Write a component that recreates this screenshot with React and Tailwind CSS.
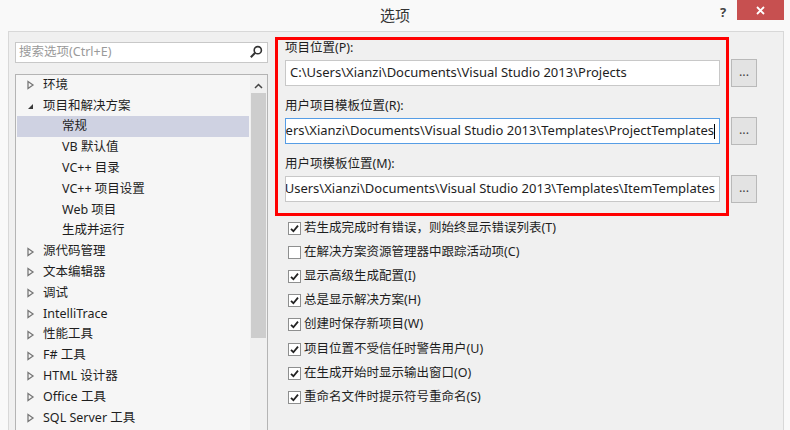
import React from 'react';

const treeItems = [
  { label: '环境', level: 0, state: 'closed' },
  { label: '项目和解决方案', level: 0, state: 'open' },
  { label: '常规', level: 1, selected: true },
  { label: 'VB 默认值', level: 1 },
  { label: 'VC++ 目录', level: 1 },
  { label: 'VC++ 项目设置', level: 1 },
  { label: 'Web 项目', level: 1 },
  { label: '生成并运行', level: 1 },
  { label: '源代码管理', level: 0, state: 'closed' },
  { label: '文本编辑器', level: 0, state: 'closed' },
  { label: '调试', level: 0, state: 'closed' },
  { label: 'IntelliTrace', level: 0, state: 'closed' },
  { label: '性能工具', level: 0, state: 'closed' },
  { label: 'F# 工具', level: 0, state: 'closed' },
  { label: 'HTML 设计器', level: 0, state: 'closed' },
  { label: 'Office 工具', level: 0, state: 'closed' },
  { label: 'SQL Server 工具', level: 0, state: 'closed' },
];

const options = [
  { label: '若生成完成时有错误，则始终显示错误列表(T)', checked: true },
  { label: '在解决方案资源管理器中跟踪活动项(C)', checked: false },
  { label: '显示高级生成配置(I)', checked: true },
  { label: '总是显示解决方案(H)', checked: true },
  { label: '创建时保存新项目(W)', checked: true },
  { label: '项目位置不受信任时警告用户(U)', checked: true },
  { label: '在生成开始时显示输出窗口(O)', checked: true },
  { label: '重命名文件时提示符号重命名(S)', checked: true },
];

const paths = [
  { label: '项目位置(P):', value: 'C:\\Users\\Xianzi\\Documents\\Visual Studio 2013\\Projects', align: 'start' },
  { label: '用户项目模板位置(R):', value: 'C:\\Users\\Xianzi\\Documents\\Visual Studio 2013\\Templates\\ProjectTemplates', align: 'end', focused: true },
  { label: '用户项模板位置(M):', value: 'C:\\Users\\Xianzi\\Documents\\Visual Studio 2013\\Templates\\ItemTemplates', align: 'end' },
];

const Arrow = ({ state }) =>
  state === 'open' ? (
    <svg width="9" height="9" viewBox="0 0 9 9">
      <polygon points="7,2 7,7 2,7" fill="#3a3a3a" />
    </svg>
  ) : (
    <svg width="9" height="10" viewBox="0 0 9 10">
      <polygon points="2,1.5 7,5 2,8.5" fill="none" stroke="#777" strokeWidth="1.3" />
    </svg>
  );

const Check = () => (
  <svg width="11" height="11" viewBox="0 0 11 11">
    <path d="M2 5.8 L4.4 8.2 L9 2.6" fill="none" stroke="#222" strokeWidth="1.8" />
  </svg>
);

const App = () => {
  return (
    <div className="w-[790px] h-[430px] bg-[#f9f9f9] relative overflow-hidden text-[#1e1e1e] font-['Segoe_UI','Noto_Sans','Noto_Sans_CJK_SC',sans-serif] text-[12.5px]">
      {/* title bar */}
      <div className="h-[31px] flex items-start">
        <div className="w-[78px]" />
        <div className="flex-1 text-center text-[15px] leading-[31px] text-[#333]">选项</div>
        <div className="w-[78px] flex items-start">
          <span className="w-[22px] pt-[3px] text-center font-bold text-[13px] text-[#444]">?</span>
          <div className="ml-[3px] w-[47px] h-[20px] bg-[#c75050] flex items-center justify-center">
            <svg width="9" height="9" viewBox="0 0 9 9">
              <path d="M1 1 L8 8 M8 1 L1 8" stroke="#fff" strokeWidth="1.8" />
            </svg>
          </div>
        </div>
      </div>

      {/* body panel */}
      <div className="ml-[8px] mr-[6px] h-[420px] bg-[#f0f0f0] border border-[#d8d8d8] flex">
        {/* left column */}
        <div className="w-[259px] pl-[6px] pt-[10px] flex flex-col">
          <div className="h-[21px] bg-white border border-[#c8c8c8] flex items-center pl-[3px] pr-[4px]">
            <span className="flex-1 text-[#9a9a9a]">搜索选项(Ctrl+E)</span>
            <svg width="14" height="14" viewBox="0 0 14 14">
              <circle cx="8.8" cy="5.2" r="3.6" fill="none" stroke="#333" strokeWidth="1.6" />
              <path d="M6.2 7.8 L1.8 12.2" stroke="#333" strokeWidth="2" />
            </svg>
          </div>
          <div className="mt-[11px] h-[380px] bg-[#f6f6f6] border border-[#b4b4b4] flex">
            <div className="flex-1 pl-[1px] pr-[1px]">
              {treeItems.map((it) => (
                <div
                  key={it.label}
                  className={`h-[20.8px] flex items-center ${it.selected ? 'bg-[#cfd2e2]' : ''} ${it.level === 0 ? 'pl-[9px]' : 'pl-[45px]'}`}
                >
                  {it.level === 0 && (
                    <span className="w-[17px] flex items-center">
                      <Arrow state={it.state} />
                    </span>
                  )}
                  <span>{it.label}</span>
                </div>
              ))}
            </div>
            <div className="w-[17px] bg-[#f0f0f0] flex flex-col items-center">
              <svg className="mt-[8px]" width="9" height="6" viewBox="0 0 9 6">
                <path d="M1 5 L4.5 1.5 L8 5" fill="none" stroke="#444" strokeWidth="1.5" />
              </svg>
              <div className="mt-[4px] w-[15px] h-[245px] bg-[#cdcdcd]" />
            </div>
          </div>
        </div>

        {/* right column */}
        <div className="flex-1 pl-[17px] pt-[7px]">
          {paths.map((p) => (
            <div key={p.label} className="mb-[10px]">
              <div className="h-[18px] leading-[18px]">{p.label}</div>
              <div className="mt-[2px] flex items-center">
                <div
                  className={`w-[435px] h-[26px] bg-white border overflow-hidden whitespace-nowrap flex items-center px-[4px] text-[13px] ${p.focused ? 'border-[#569de5]' : 'border-[#c8c8c8]'} ${p.align === 'end' ? 'justify-end' : 'justify-start'}`}
                >
                  <span className="shrink-0">{p.value}</span>
                  {p.focused && <span className="shrink-0 w-[1px] h-[15px] bg-black" />}
                </div>
                <div className="ml-[11px] w-[26px] h-[28px] bg-[#e3e3e3] border border-[#b9b9b9] flex items-center justify-center text-[#444] leading-none pb-[2px]">
                  ...
                </div>
              </div>
            </div>
          ))}
          <div className="pt-[3px] pl-[3px]">
            {options.map((o) => (
              <div key={o.label} className="h-[24.2px] flex items-center">
                <span className="w-[13px] h-[13px] bg-white border border-[#8e8f8f] flex items-center justify-center">
                  {o.checked && <Check />}
                </span>
                <span className="ml-[3px]">{o.label}</span>
              </div>
            ))}
          </div>
        </div>
      </div>

      {/* annotation frame */}
      <div className="absolute left-[275px] top-[37px] w-[454px] h-[179px] border-[3px] border-[#f00] pointer-events-none" />
    </div>
  );
};

export default App;
